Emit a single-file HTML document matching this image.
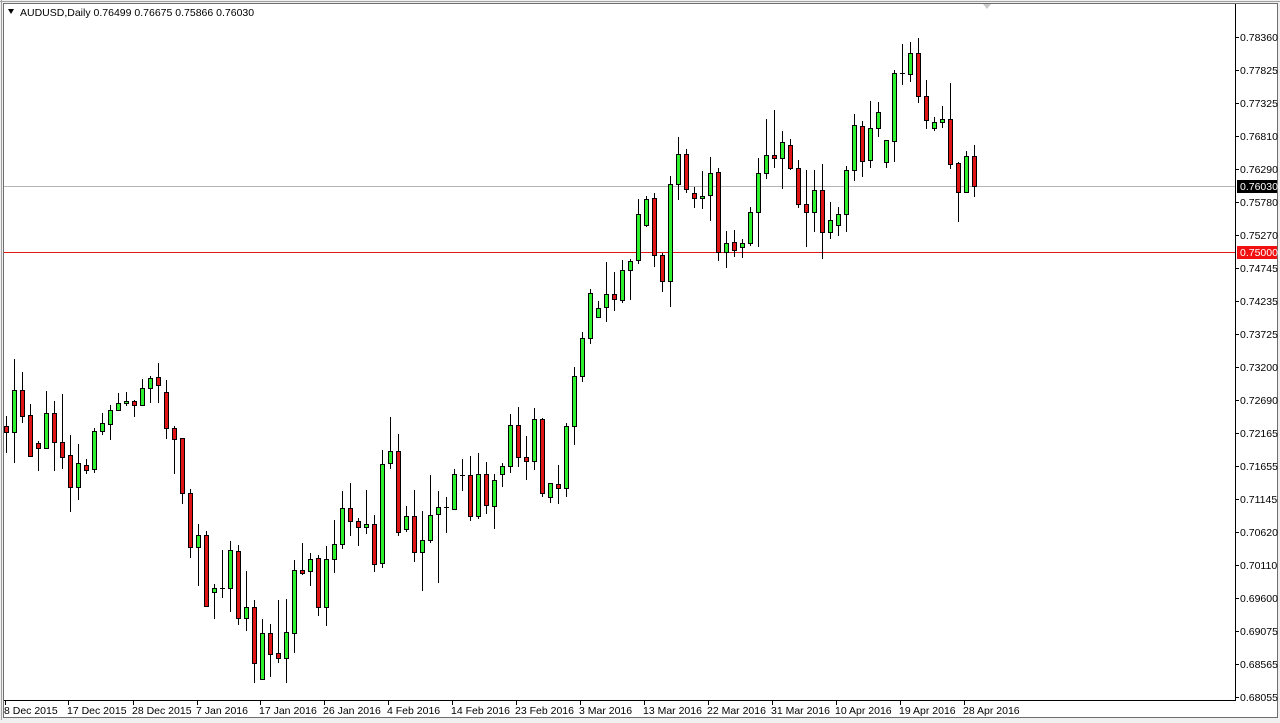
<!DOCTYPE html>
<html><head><meta charset="utf-8">
<style>
html,body{margin:0;padding:0;background:#f0f0f0;}
body{width:1280px;height:723px;overflow:hidden;position:relative;font-family:"Liberation Sans",Arial,sans-serif;}
#c{position:absolute;left:0;top:0;}
</style></head>
<body>
<svg id="c" width="1280" height="723" xmlns="http://www.w3.org/2000/svg" font-family="Liberation Sans, Arial, sans-serif" font-size="10.5">
<rect x="0" y="0" width="1280" height="723" fill="#f0f0f0"/>
<rect x="3.5" y="3.5" width="1274" height="714" fill="#fff" stroke="#6e6e6e"/>
<line x1="1.5" y1="0" x2="1.5" y2="720" stroke="#a0a0a0"/>
<line x1="0" y1="1.5" x2="1280" y2="1.5" stroke="#a0a0a0"/>
<line x1="1235.5" y1="4" x2="1235.5" y2="700" stroke="#000"/>
<line x1="4" y1="700.5" x2="1236" y2="700.5" stroke="#000"/>
<polygon points="983,4 991,4 987,9" fill="#c8c8c8"/>
<polygon points="8,9 14,9 11,14" fill="#000"/>
<text x="20" y="16" fill="#000">AUDUSD,Daily  0.76499 0.76675 0.75866 0.76030</text>
<line x1="4" y1="186.5" x2="1235" y2="186.5" stroke="#b4b4b4"/>
<line x1="4" y1="252.5" x2="1235" y2="252.5" stroke="#e01818"/>
<g id="g"></g>
<g id="ax"></g>
<rect x="1237" y="180" width="40" height="13" fill="#000"/>
<text x="1240" y="190" fill="#fff">0.76030</text>
<rect x="1237" y="246" width="40" height="13" fill="#f01010"/>
<text x="1240" y="256" fill="#fff">0.75000</text>
</svg>
<script>
var c1="r,258,277,228,340|g,151,277,57,368|r,151,227,96,248|r,226,347,192,352|r,310,323,302,392|g,220,323,153,326|r,220,307,183,392|r,307,350,162,386|r,346,442,285,515|g,370,442,312,479|r,376,389,357,401|g,274,388,265,398|g,250,274,220,284|g,211,253,196,299|g,190,211,158,211|g,184,190,156,197|r,184,196,180,230|g,145,196,118,196|g,115,145,108,188|r,112,136,68,188|r,157,265,120,298|r,265,298,258,402|r,295,460,295,493|r,460,622,448,653|g,586,622,552,737|r,586,797,574,797|g,745,757,733,838|d,743,745,630,775|g,631,743,603,815|r,634,835,615,855|g,800,835,692,872|r,800,970,780,1030|g,880,1018,838,1018|r,880,943,853,1010|r,940,955,780,968|g,877,955,776,1030|g,691,880,660,938|r,690,700,610,704|g,658,694,640,738|r,655,800,645,828|g,658,800,618,858";
var c2="g,853,898,780,938|g,745,853,693,868|r,745,782,670,827|r,784,802,775,857|g,793,802,690,822|r,793,913,765,935|g,613,910,570,925|g,574,610,471,627|r,574,817,522,827|g,769,808,738,815|r,769,877,690,905|g,841,877,753,992|g,766,841,645,848|g,742,763,692,970|d,740,742,712,818|g,643,748,628,748|d,644,646,598,692|r,646,767,589,782|g,643,767,579,778|r,643,736,606,762|g,661,737,641,806|g,619,643,610,680|g,496,619,462,638|r,496,592,441,620|r,592,604,528,660|g,478,604,445,630|r,478,700,475,712|g,670,712,670,730|r,673,683,615,731|g,499,685,488,710|g,349,499,320,554|g,235,349,215,365|g,100,235,88,253|g,145,172,123,172|g,103,142,7,185|r,103,118,37,152|g,31,121,0,128|g,4,31,-3,119";
var c3="g,508,586,497,592|r,505,676,490,710|r,676,753,668,785|g,463,753,438,832|g,373,463,321,510|r,373,478,357,488|r,490,505,470,535|g,498,505,422,538|g,430,496,381,572|r,427,667,415,692|g,640,667,603,713|r,637,660,601,680|g,640,652,626,683|g,547,640,531,648|g,430,547,385,650|g,376,430,267,448|r,376,385,240,413|g,337,385,304,478|r,346,415,327,420|r,415,523,390,535|r,523,547,420,650|g,481,547,420,605|r,481,607,402,686|g,571,607,517,626|g,553,586,532,617|g,421,553,408,605|g,286,421,253,452|r,289,394,273,440|g,295,391,213,415|g,247,295,216,320|g,331,397,331,415|g,130,334,120,395|d,130,132,42,165|g,70,133,37,155|r,70,199,25,220|r,199,271,150,296|g,277,295,262,302|g,268,277,228,295|r,268,403,158,418|r,400,487,395,577|g,379,485,364,490|r,379,469,345,502";
var C=[];
function add(s,base){s.split("|").forEach(function(t){var a=t.split(",");C.push([a[0],base+a[1]/3,base+a[2]/3,base+a[3]/3,base+a[4]/3]);});}
add(c1,340);add(c2,260);C.push(["g",214,260,199,264]);add(c3,30);
var h="";
C.forEach(function(k,i){var x=6+8*i;var t=Math.round(k[1]),b=Math.round(k[2]),hi=Math.round(k[3]),lo=Math.round(k[4]);
h+='<line x1="'+(x+.5)+'" y1="'+hi+'" x2="'+(x+.5)+'" y2="'+lo+'" stroke="#000"/>';
if(k[0]=="d"||b-t<1){h+='<line x1="'+(x-2)+'" y1="'+(t+.5)+'" x2="'+(x+3)+'" y2="'+(t+.5)+'" stroke="#000"/>';}
else{h+='<rect x="'+(x-1.5)+'" y="'+(t+.5)+'" width="4" height="'+(b-t)+'" fill="'+(k[0]=="g"?"#2ef02e":"#e01414")+'" stroke="#000"/>';}
});
document.getElementById("g").innerHTML=h;
var P=["0.78360","0.77825","0.77325","0.76810","0.76290","0.75780","0.75270","0.74745","0.74235","0.73725","0.73200","0.72690","0.72165","0.71655","0.71145","0.70620","0.70110","0.69600","0.69075","0.68565","0.68055"];
var a="";
P.forEach(function(p,i){var y=37+33*i;a+='<line x1="1235" y1="'+(y+.5)+'" x2="1239" y2="'+(y+.5)+'" stroke="#000"/><text x="1240" y="'+(y+4)+'" fill="#000">'+p+'</text>';});
var D=[["8 Dec 2015",5],["17 Dec 2015",68],["28 Dec 2015",133],["7 Jan 2016",197],["17 Jan 2016",260],["26 Jan 2016",324],["4 Feb 2016",388],["14 Feb 2016",452],["23 Feb 2016",516],["3 Mar 2016",580],["13 Mar 2016",644],["22 Mar 2016",708],["31 Mar 2016",772],["10 Apr 2016",836],["19 Apr 2016",900],["28 Apr 2016",964]];
D.forEach(function(d){a+='<line x1="'+(d[1]+.5)+'" y1="700" x2="'+(d[1]+.5)+'" y2="705" stroke="#000"/><text x="'+(d[1]-1)+'" y="714" fill="#000">'+d[0]+'</text>';});
document.getElementById("ax").innerHTML=a;
</script>
</body></html>
